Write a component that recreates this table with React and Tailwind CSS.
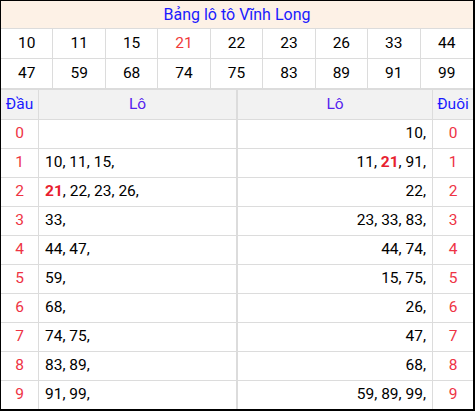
import React from "react";

const top1 = ["10", "11", "15", "21", "22", "23", "26", "33", "44"];
const top2 = ["47", "59", "68", "74", "75", "83", "89", "91", "99"];

const dau = [
  [],
  ["10", "11", "15"],
  ["21", "22", "23", "26"],
  ["33"],
  ["44", "47"],
  ["59"],
  ["68"],
  ["74", "75"],
  ["83", "89"],
  ["91", "99"],
];
const duoi = [
  ["10"],
  ["11", "21", "91"],
  ["22"],
  ["23", "33", "83"],
  ["44", "74"],
  ["15", "75"],
  ["26"],
  ["47"],
  ["68"],
  ["59", "89", "99"],
];

function Nums({ list }) {
  return (
    <>
      {list.map((n, i) => (
        <React.Fragment key={i}>
          {n === "21" ? <span className="font-bold text-[#e8202e]">{n}</span> : <span>{n}</span>}
          {i < list.length - 1 ? ", " : ","}
        </React.Fragment>
      ))}
    </>
  );
}

function TopRow({ list, last }) {
  return (
    <div className={`grid grid-cols-9 border-[#dcdcdc] ${last ? "border-b-2 h-[31px]" : "border-b h-[30px]"}`}>
      {list.map((n, i) => (
        <div
          key={i}
          className={`flex items-center justify-center border-[#dcdcdc] ${i < 8 ? "border-r" : ""} ${n === "21" ? "text-[#f03a3a]" : "text-black"}`}
        >
          {n}
        </div>
      ))}
    </div>
  );
}

export default function App() {
  return (
    <div
      className="w-[475px] h-[411px] border-black border-t border-l border-r-2 border-b-2 bg-white text-[15.5px] leading-none"
      style={{ fontFamily: "Roboto, 'Noto Sans', sans-serif" }}
    >
      <div className="h-[28px] bg-[#fdf1e6] border-b border-[#dcdcdc] flex items-center justify-center text-[#1a1aff] text-[16px]">
        Bảng lô tô Vĩnh Long
      </div>
      <TopRow list={top1} />
      <TopRow list={top2} last />
      <div className="flex h-[30px] bg-[#f2f2f2] border-b border-[#dcdcdc]">
        <div className="w-[38px] border-r border-[#dcdcdc] flex items-center justify-center text-[#1a1aff]">Đầu</div>
        <div className="w-[199px] border-r-2 border-[#dcdcdc] flex items-center justify-center text-[#5522ee]">Lô</div>
        <div className="w-[195px] border-r border-[#dcdcdc] flex items-center justify-center text-[#5522ee]">Lô</div>
        <div className="flex-1 flex items-center justify-center text-[#1a1aff]">Đuôi</div>
      </div>
      {dau.map((d, i) => (
        <div key={i} className={`flex border-[#dcdcdc] ${i < 9 ? "border-b h-[29px]" : "h-[28px]"}`}>
          <div className="w-[38px] border-r border-[#dcdcdc] flex items-center justify-center text-[#ee3344]">{i}</div>
          <div className="w-[199px] border-r-2 border-[#dcdcdc] flex items-center px-[6px] text-black whitespace-pre">
            <Nums list={d} />
          </div>
          <div className="w-[195px] border-r border-[#dcdcdc] flex items-center justify-end px-[6px] text-black whitespace-pre">
            <Nums list={duoi[i]} />
          </div>
          <div className="flex-1 flex items-center justify-center text-[#ee3344]">{i}</div>
        </div>
      ))}
    </div>
  );
}
